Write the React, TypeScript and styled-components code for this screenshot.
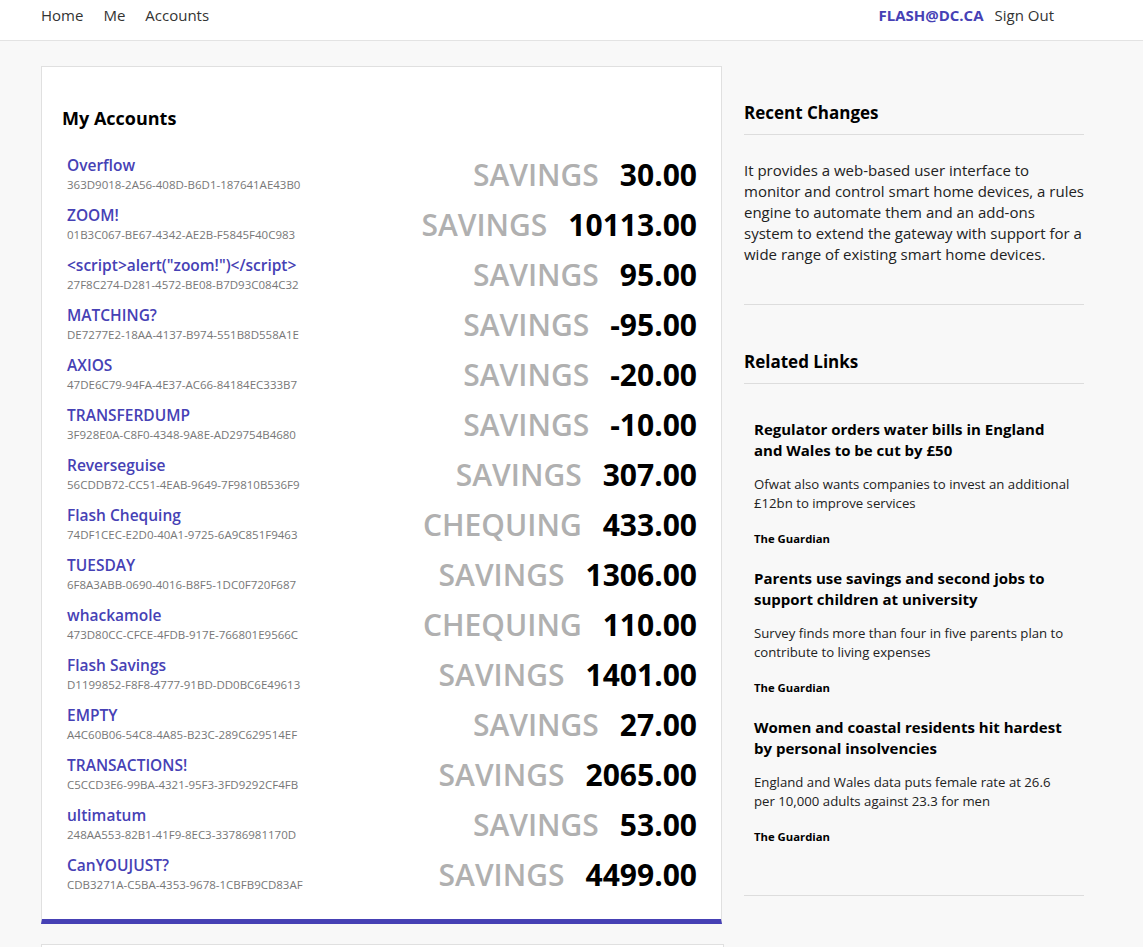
import React from "react";
import styled, { createGlobalStyle } from "styled-components";

const Global = createGlobalStyle`
  html, body { margin: 0; padding: 0; }
  body {
    background: #f8f8f8;
    font-family: "Open Sans", "Noto Sans", sans-serif;
    color: #222;
  }
`;

const NavBar = styled.header`
  background: #fff;
  border-bottom: 1px solid #e3e3e3;
  height: 40px;
`;

const NavInner = styled.nav`
  width: 1013px;
  margin-left: 41px;
  height: 30px;
  display: flex;
  align-items: center;
  justify-content: space-between;
`;

const NavGroup = styled.div`
  display: flex;
  align-items: center;
  gap: 20px;
`;

const NavLink = styled.a<{ $strong?: boolean }>`
  font-size: 15px;
  color: ${(p) => (p.$strong ? "#4641b5" : "#333")};
  font-weight: ${(p) => (p.$strong ? 700 : 400)};
  text-decoration: none;
`;

const RightNav = styled(NavGroup)`
  gap: 11px;
`;

const Page = styled.main`
  margin: 25px 0 0 41px;
  display: grid;
  grid-template-columns: 681px 340px;
  column-gap: 22px;
  align-items: start;
`;

const Card = styled.section`
  background: #fff;
  border: 1px solid #e0e0e0;
  border-bottom: 5px solid #4641b5;
  padding: 40px 24px 13px 20px;
`;

const CardTitle = styled.h2`
  margin: 0 0 26px;
  font-size: 18px;
  line-height: 23px;
  font-weight: 700;
  color: #000;
`;

const List = styled.ul`
  list-style: none;
  margin: 0;
  padding: 0 0 0 5px;
`;

const Row = styled.li`
  height: 50px;
  display: flex;
  justify-content: space-between;
  align-items: flex-start;
`;

const AccountInfo = styled.div`
  display: flex;
  flex-direction: column;
`;

const AccountName = styled.a`
  font-size: 15.5px;
  line-height: 19px;
  color: #4641b5;
  font-weight: 600;
  text-decoration: none;
`;

const AccountId = styled.span`
  font-size: 11.5px;
  line-height: 19px;
  color: #777;
`;

const Balance = styled.div`
  display: flex;
  align-items: center;
  gap: 21px;
  line-height: 40px;
  margin-top: -1px;
`;

const AccountType = styled.span`
  font-size: 30px;
  font-weight: 600;
  color: #b0b0b0;
`;

const Amount = styled.span`
  font-size: 30px;
  font-weight: 700;
  color: #000;
`;

const Side = styled.aside`
  display: flex;
  flex-direction: column;
`;

const SideTitle = styled.h3`
  margin: 35px 0 0;
  font-size: 17px;
  line-height: 24px;
  font-weight: 700;
  color: #000;
  padding-bottom: 9px;
  border-bottom: 1px solid #ddd;
`;

const SideText = styled.p`
  margin: 25px 0 0;
  font-size: 15px;
  line-height: 21px;
  color: #222;
  padding-bottom: 39px;
  border-bottom: 1px solid #ddd;
`;

const RelatedTitle = styled(SideTitle)`
  margin-top: 45px;
`;

const Articles = styled.div`
  padding: 35px 10px 50px;
  border-bottom: 1px solid #ddd;
  display: flex;
  flex-direction: column;
  gap: 21px;
`;

const Article = styled.article`
  display: flex;
  flex-direction: column;
`;

const ArticleTitle = styled.h4`
  margin: 0;
  font-size: 15px;
  line-height: 21px;
  font-weight: 700;
  color: #000;
`;

const ArticleDesc = styled.p`
  margin: 14px 0 0;
  font-size: 13.2px;
  line-height: 19px;
  color: #222;
`;

const Source = styled.span`
  margin-top: 18px;
  font-size: 11.3px;
  line-height: 16px;
  font-weight: 700;
  color: #000;
`;

const NextCard = styled.div`
  margin: 20px 0 0 41px;
  width: 681px;
  height: 20px;
  background: #fff;
  border: 1px solid #e0e0e0;
`;

const accounts = [
  ["Overflow", "363D9018-2A56-408D-B6D1-187641AE43B0", "SAVINGS", "30.00"],
  ["ZOOM!", "01B3C067-BE67-4342-AE2B-F5845F40C983", "SAVINGS", "10113.00"],
  ['<script>alert("zoom!")</script>', "27F8C274-D281-4572-BE08-B7D93C084C32", "SAVINGS", "95.00"],
  ["MATCHING?", "DE7277E2-18AA-4137-B974-551B8D558A1E", "SAVINGS", "-95.00"],
  ["AXIOS", "47DE6C79-94FA-4E37-AC66-84184EC333B7", "SAVINGS", "-20.00"],
  ["TRANSFERDUMP", "3F928E0A-C8F0-4348-9A8E-AD29754B4680", "SAVINGS", "-10.00"],
  ["Reverseguise", "56CDDB72-CC51-4EAB-9649-7F9810B536F9", "SAVINGS", "307.00"],
  ["Flash Chequing", "74DF1CEC-E2D0-40A1-9725-6A9C851F9463", "CHEQUING", "433.00"],
  ["TUESDAY", "6F8A3ABB-0690-4016-B8F5-1DC0F720F687", "SAVINGS", "1306.00"],
  ["whackamole", "473D80CC-CFCE-4FDB-917E-766801E9566C", "CHEQUING", "110.00"],
  ["Flash Savings", "D1199852-F8F8-4777-91BD-DD0BC6E49613", "SAVINGS", "1401.00"],
  ["EMPTY", "A4C60B06-54C8-4A85-B23C-289C629514EF", "SAVINGS", "27.00"],
  ["TRANSACTIONS!", "C5CCD3E6-99BA-4321-95F3-3FD9292CF4FB", "SAVINGS", "2065.00"],
  ["ultimatum", "248AA553-82B1-41F9-8EC3-33786981170D", "SAVINGS", "53.00"],
  ["CanYOUJUST?", "CDB3271A-C5BA-4353-9678-1CBFB9CD83AF", "SAVINGS", "4499.00"],
];

const articles = [
  {
    title: "Regulator orders water bills in England and Wales to be cut by £50",
    desc: "Ofwat also wants companies to invest an additional £12bn to improve services",
  },
  {
    title: "Parents use savings and second jobs to support children at university",
    desc: "Survey finds more than four in five parents plan to contribute to living expenses",
  },
  {
    title: "Women and coastal residents hit hardest by personal insolvencies",
    desc: "England and Wales data puts female rate at 26.6 per 10,000 adults against 23.3 for men",
  },
];

export default function App() {
  return (
    <>
      <Global />
      <NavBar>
        <NavInner>
          <NavGroup>
            <NavLink href="#">Home</NavLink>
            <NavLink href="#">Me</NavLink>
            <NavLink href="#">Accounts</NavLink>
          </NavGroup>
          <RightNav>
            <NavLink href="#" $strong>FLASH@DC.CA</NavLink>
            <NavLink href="#">Sign Out</NavLink>
          </RightNav>
        </NavInner>
      </NavBar>
      <Page>
        <Card>
          <CardTitle>My Accounts</CardTitle>
          <List>
            {accounts.map(([name, id, type, amount]) => (
              <Row key={id}>
                <AccountInfo>
                  <AccountName href="#">{name}</AccountName>
                  <AccountId>{id}</AccountId>
                </AccountInfo>
                <Balance>
                  <AccountType>{type}</AccountType>
                  <Amount>{amount}</Amount>
                </Balance>
              </Row>
            ))}
          </List>
        </Card>
        <Side>
          <SideTitle>Recent Changes</SideTitle>
          <SideText>
            It provides a web-based user interface to monitor and control smart home devices, a rules
            engine to automate them and an add-ons system to extend the gateway with support for a
            wide range of existing smart home devices.
          </SideText>
          <RelatedTitle>Related Links</RelatedTitle>
          <Articles>
            {articles.map((a) => (
              <Article key={a.title}>
                <ArticleTitle>{a.title}</ArticleTitle>
                <ArticleDesc>{a.desc}</ArticleDesc>
                <Source>The Guardian</Source>
              </Article>
            ))}
          </Articles>
        </Side>
      </Page>
      <NextCard />
    </>
  );
}
